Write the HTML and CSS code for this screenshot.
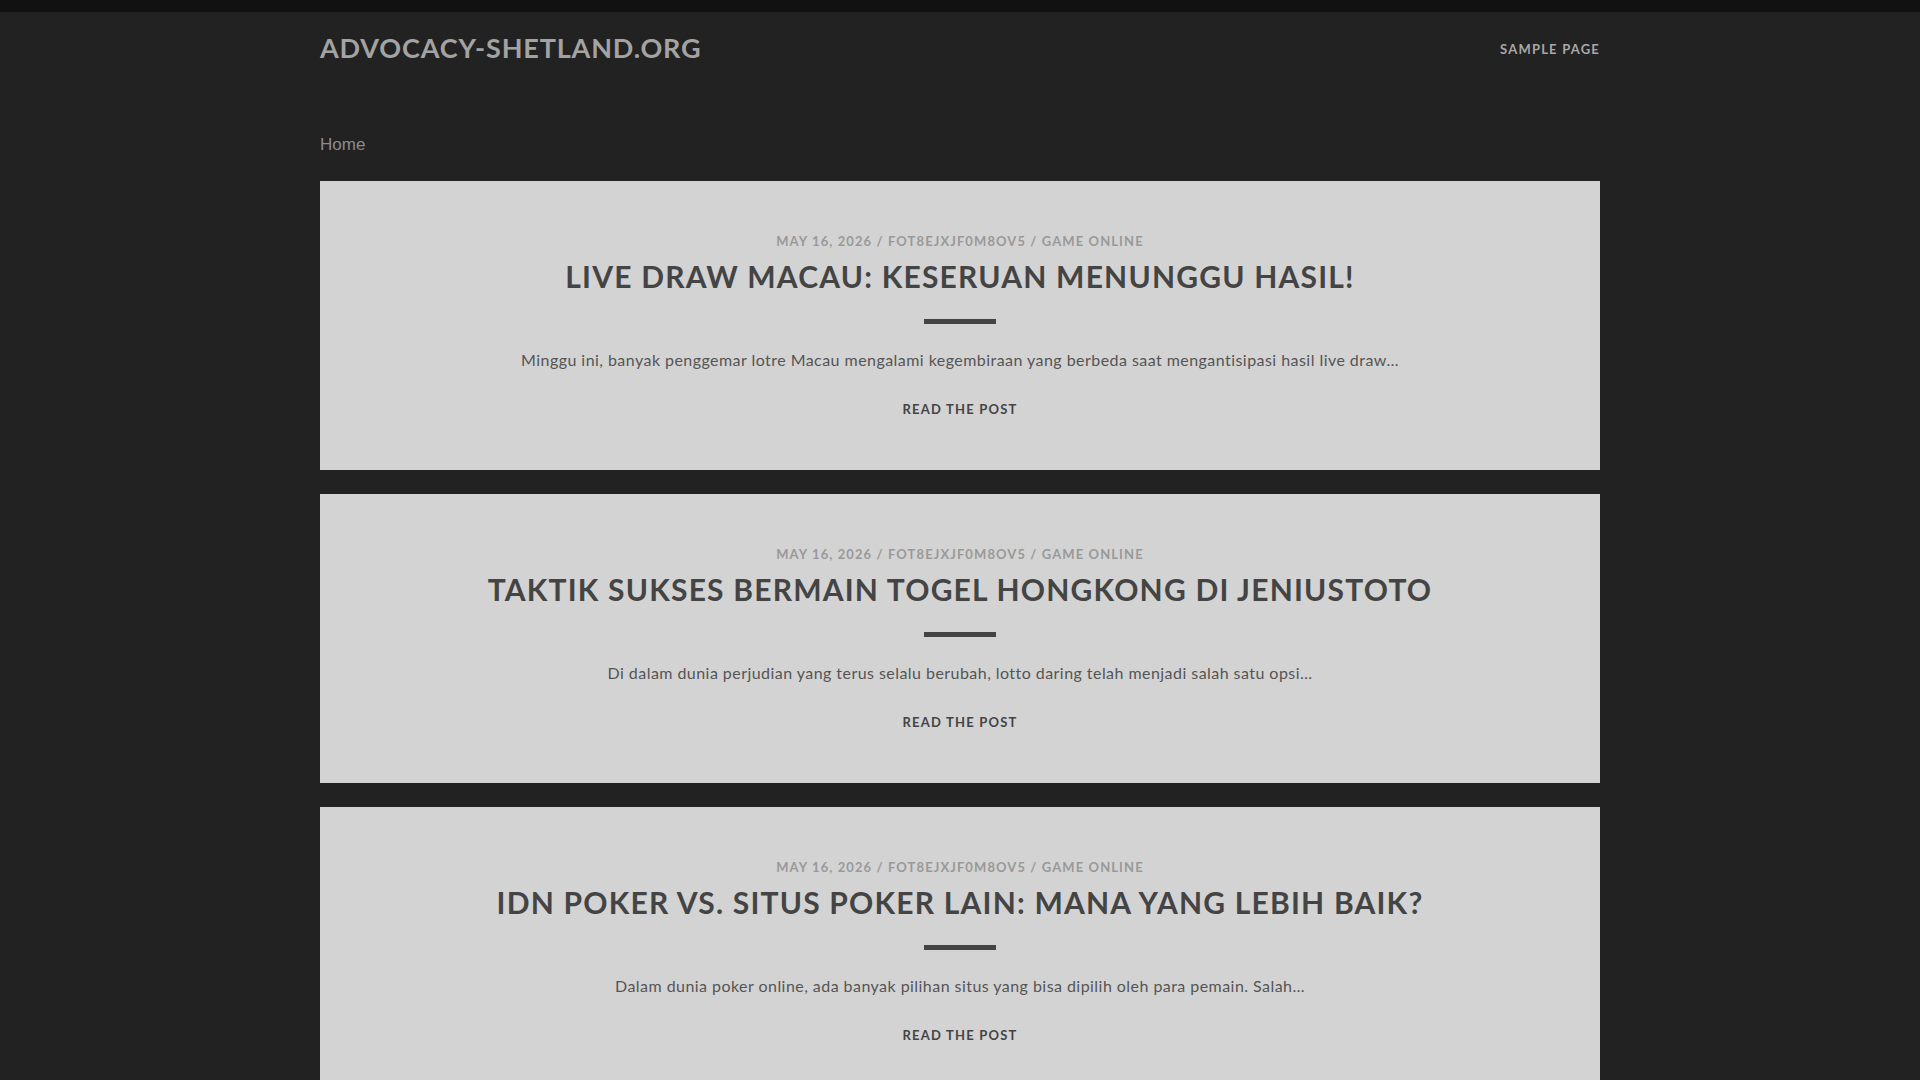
FILE: index.html
```html
<!DOCTYPE html>
<html lang="id">
<head>
<meta charset="utf-8">
<title>advocacy-shetland.org</title>
<link rel="stylesheet" href="styles.css">
</head>
<body>
<div class="topbar"></div>
<div class="wrap">
  <header class="site-header">
    <a class="site-title" href="#">ADVOCACY-SHETLAND.ORG</a>
    <nav class="main-nav"><a href="#">SAMPLE PAGE</a></nav>
  </header>
  <div class="breadcrumb">Home</div>
  <main class="posts">
    <article class="card">
      <div class="meta">MAY 16, 2026 / FOT8EJXJF0M8OV5 / GAME ONLINE</div>
      <h2 class="entry-title">LIVE DRAW MACAU: KESERUAN MENUNGGU HASIL!</h2>
      <div class="divider"></div>
      <p class="excerpt">Minggu ini, banyak penggemar lotre Macau mengalami kegembiraan yang berbeda saat mengantisipasi hasil live draw…</p>
      <a class="read-more" href="#">READ THE POST</a>
    </article>
    <article class="card">
      <div class="meta">MAY 16, 2026 / FOT8EJXJF0M8OV5 / GAME ONLINE</div>
      <h2 class="entry-title">TAKTIK SUKSES BERMAIN TOGEL HONGKONG DI JENIUSTOTO</h2>
      <div class="divider"></div>
      <p class="excerpt">Di dalam dunia perjudian yang terus selalu berubah, lotto daring telah menjadi salah satu opsi…</p>
      <a class="read-more" href="#">READ THE POST</a>
    </article>
    <article class="card">
      <div class="meta">MAY 16, 2026 / FOT8EJXJF0M8OV5 / GAME ONLINE</div>
      <h2 class="entry-title">IDN POKER VS. SITUS POKER LAIN: MANA YANG LEBIH BAIK?</h2>
      <div class="divider"></div>
      <p class="excerpt">Dalam dunia poker online, ada banyak pilihan situs yang bisa dipilih oleh para pemain. Salah…</p>
      <a class="read-more" href="#">READ THE POST</a>
    </article>
  </main>
</div>
</body>
</html>
```

FILE: styles.css
```css
html, body {
  margin: 0;
  padding: 0;
}
body {
  background: #222222;
  font-family: Lato, "Open Sans", "Liberation Sans", sans-serif;
  color: #555555;
}
a {
  text-decoration: none;
  color: inherit;
}
.topbar {
  height: 12px;
  background: #111111;
}
.wrap {
  width: 1280px;
  margin: 0 auto;
}
.site-header {
  display: flex;
  justify-content: space-between;
  align-items: center;
  height: 72px;
}
.site-title {
  font-size: 27px;
  font-weight: 700;
  letter-spacing: 0.85px;
  color: #a3a3a3;
  line-height: 36px;
}
.main-nav a {
  font-size: 13px;
  font-weight: 700;
  letter-spacing: 1.2px;
  color: #a8a8a8;
  line-height: 20px;
}
.breadcrumb {
  margin-top: 49px;
  font-size: 17px;
  line-height: 24px;
  color: #8c8c8c;
  font-family: "Liberation Sans", Arial, sans-serif;
}
.posts {
  margin-top: 24px;
  display: flex;
  flex-direction: column;
  gap: 24px;
}
.card {
  background: #d3d3d3;
  text-align: center;
  padding: 50px 40px 51px;
  display: flex;
  flex-direction: column;
  align-items: center;
}
.meta {
  font-size: 13px;
  font-weight: 700;
  letter-spacing: 1.1px;
  line-height: 20px;
  color: #999999;
}
.entry-title {
  margin: 5px 0 0;
  font-size: 30px;
  font-weight: 700;
  letter-spacing: 1.2px;
  line-height: 40px;
  color: #444444;
}
.divider {
  margin-top: 23px;
  width: 72px;
  height: 5px;
  background: #444444;
}
.excerpt {
  margin: 23px 0 0;
  font-size: 16px;
  letter-spacing: 0.45px;
  line-height: 26px;
  color: #555555;
}
.read-more {
  margin-top: 26px;
  font-size: 13px;
  font-weight: 700;
  letter-spacing: 1.2px;
  line-height: 20px;
  color: #444444;
}
```
